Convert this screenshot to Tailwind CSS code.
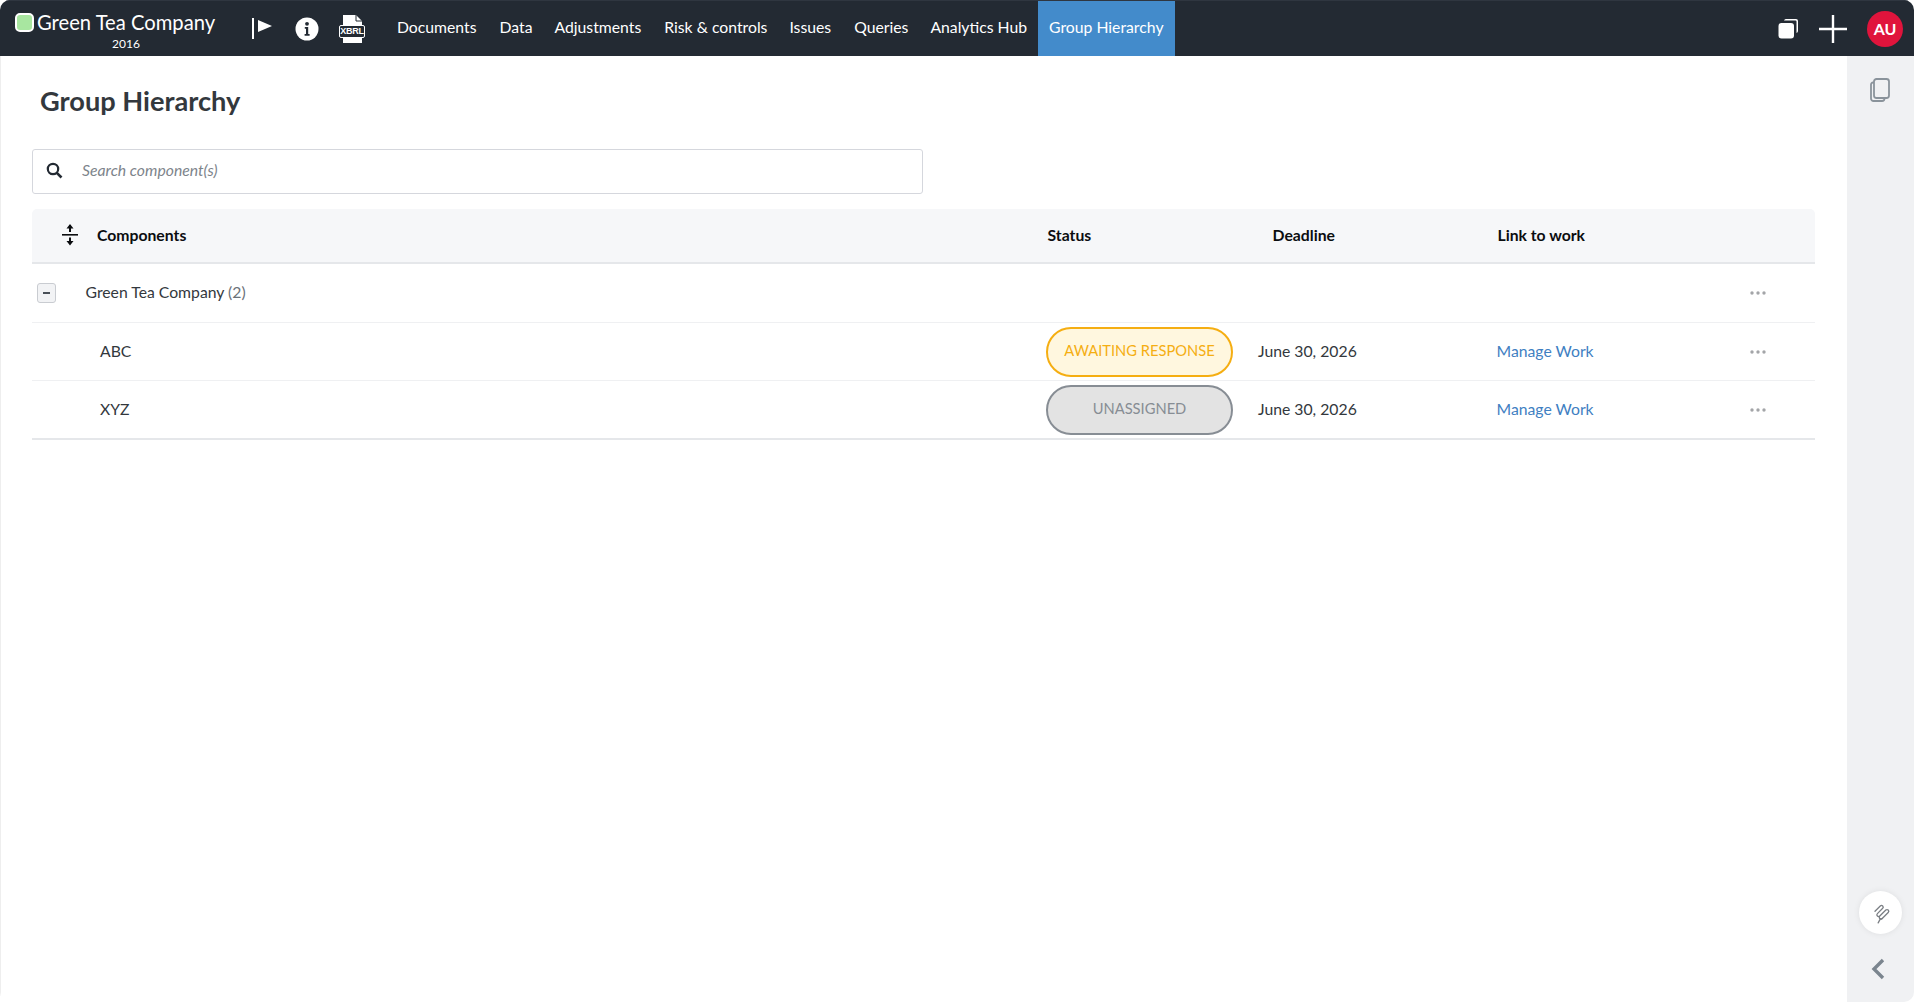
<!DOCTYPE html>
<html>
<head>
<meta charset="utf-8">
<title>Group Hierarchy</title>
<script src="https://cdn.jsdelivr.net/npm/@tailwindcss/browser@4"></script>
</head>
<body class="bg-white font-['Lato','Noto_Sans',sans-serif] text-[15.75px] text-[#33383d]">
<div class="flex h-[1002px] w-[1914px] flex-col overflow-hidden rounded-[10px] bg-white">
  <header class="flex h-[56px] shrink-0 items-stretch border-t border-[#2f3640] bg-[#232a33] text-white">
    <div class="flex w-[397px] shrink-0 items-start">
      <div class="relative w-[235px] shrink-0">
        <span class="absolute left-[15px] top-[12px] h-[19px] w-[19px] rounded-[5px] border-2 border-white bg-[#a8e6a0]"></span>
        <div class="pl-[37px] pt-[7px] text-[20.2px] leading-[29px] whitespace-nowrap">Green Tea Company</div>
        <div class="pl-[112px] text-[12px] leading-[14px]">2016</div>
      </div>
      <svg class="ml-[17px] mt-[17px] shrink-0" width="22" height="22" viewBox="0 0 22 22"><rect x="0" y="0" width="2" height="21" fill="#fff"/><path d="M6 2 L20 8 L6 14 Z" fill="#fff"/></svg>
      <svg class="ml-[21px] mt-[16px] shrink-0" width="24" height="24" viewBox="0 0 24 24"><circle cx="12" cy="12" r="11.500" fill="#fff"/><circle cx="12" cy="6.800" r="1.900" fill="#232a33"/><path d="M9.800 10h3.400v7h1.400v1.800H9.600V17h1.400v-5.200H9.800Z" fill="#232a33"/></svg>
      <div class="relative ml-[20px] mt-[14px] h-[28px] w-[27px] shrink-0">
        <svg class="absolute left-[4px] top-0" width="19" height="28" viewBox="0 0 19 28"><path d="M0 0H13L19 6V28H0Z" fill="#fff"/><path d="M13 0V6H19" fill="none" stroke="#232a33" stroke-width="1"/></svg>
        <span class="absolute left-0 top-[10px] flex h-[13px] w-[26px] items-center justify-center rounded-[2px] border border-white bg-[#232a33] font-['Liberation_Sans',sans-serif] text-[9px] font-bold leading-none tracking-[-0.3px] text-white">XBRL</span>
      </div>
    </div>
    <nav class="flex items-stretch">
      <a class="mr-[23px] flex items-center pb-[3px]">Documents</a>
      <a class="mr-[22px] flex items-center pb-[3px]">Data</a>
      <a class="mr-[23px] flex items-center pb-[3px]">Adjustments</a>
      <a class="mr-[22px] flex items-center pb-[3px]">Risk &amp; controls</a>
      <a class="mr-[23px] flex items-center pb-[3px]">Issues</a>
      <a class="mr-[22px] flex items-center pb-[3px]">Queries</a>
      <a class="mr-[11px] flex items-center pb-[3px]">Analytics Hub</a>
      <a class="flex items-center bg-[#438bcb] px-[11px] pb-[3px]">Group Hierarchy</a>
    </nav>
    <div class="ml-auto flex items-center pr-[11px]">
      <svg width="21" height="21" viewBox="0 0 21 21"><path d="M6 2.500A2 2 0 0 1 8 1H18A2 2 0 0 1 20 3V13A2 2 0 0 1 18.500 15V3.500A1 1 0 0 0 17.500 2.500Z" fill="#fff"/><rect x="0.500" y="5" width="15.500" height="15.500" rx="3" fill="#fff"/></svg>
      <svg class="ml-[20px]" width="28" height="28" viewBox="0 0 28 28"><path d="M14 0V28M0 14H28" stroke="#fff" stroke-width="2.400"/></svg>
      <div class="ml-[20px] flex h-[36px] w-[36px] items-center justify-center rounded-full bg-[#e0143c] text-[16px] font-bold text-white">AU</div>
    </div>
  </header>
  <div class="flex min-h-0 flex-1">
    <main class="min-w-0 flex-1 border-l border-[#eeeeee] pl-[31px] pr-[32px]">
      <h1 class="pl-[8px] pt-[27px] text-[27.2px] font-bold leading-[36px] text-[#33383d]">Group Hierarchy</h1>
      <div class="mt-[30px] flex h-[45px] w-[891px] items-center rounded-[3px] border border-[#d5d7dd] bg-white pb-[3px] pl-[13px]">
        <svg class="mt-[1px]" width="17" height="17" viewBox="0 0 17 17"><circle cx="7" cy="7" r="5.200" fill="none" stroke="#232a33" stroke-width="2.200"/><path d="M10.800 10.800L15.500 15.500" stroke="#232a33" stroke-width="2.600"/></svg>
        <input class="ml-[19px] w-[700px] bg-transparent text-[15.750px] italic outline-none placeholder:text-[#7d848b]" placeholder="Search component(s)">
      </div>
      <div class="mt-[15px] w-[1783px]">
        <div class="grid h-[55px] grid-cols-[995px_225px_225px_225px_113px] items-center rounded-t-[5px] border-b-2 border-[#e5e7ea] bg-[#f6f7f9] font-bold text-[#0b0d10]">
          <div class="flex items-center pl-[31px]">
            <svg class="mb-[1px] ml-[-1px]" width="16" height="22" viewBox="0 0 16 22"><path d="M8 0L11.500 4.500H9V8H7V4.500H4.500Z" fill="#0b0d10"/><rect x="0" y="10" width="16" height="1.600" fill="#0b0d10"/><path d="M8 21.500L11.500 17H9V13.500H7V17H4.500Z" fill="#0b0d10"/></svg>
            <span class="mb-[2px] ml-[19px]">Components</span>
          </div>
          <div class="mb-[2px] pl-[20.5px]">Status</div>
          <div class="mb-[2px] pl-[20.5px]">Deadline</div>
          <div class="mb-[2px] pl-[20.5px]">Link to work</div>
          <div></div>
        </div>
        <div class="grid h-[59px] grid-cols-[995px_225px_225px_225px_113px] items-center border-b border-[#eff0f2]">
          <div class="flex items-center pl-[5px]">
            <span class="flex h-[20px] w-[19px] items-center justify-center rounded-[3px] border border-[#c9ccd1] bg-[#f2f3f5]"><span class="h-[2px] w-[7px] bg-[#4a5058]"></span></span>
            <span class="mb-[2px] ml-[29.500px]">Green Tea Company <span class="text-[#6b7279]">(2)</span></span>
          </div>
          <div></div><div></div><div></div>
          <div class="flex justify-center pr-[1px]"><svg width="16" height="4" viewBox="0 0 16 4"><circle cx="2" cy="2" r="1.700" fill="#a3a5a8"/><circle cx="8" cy="2" r="1.700" fill="#a3a5a8"/><circle cx="14" cy="2" r="1.700" fill="#a3a5a8"/></svg></div>
        </div>
        <div class="grid h-[58px] grid-cols-[995px_225px_225px_225px_113px] items-center border-b border-[#eff0f2]">
          <div class="mb-[2px] pl-[68px]">ABC</div>
          <div class="pl-[19px]"><span class="flex h-[50px] w-[187px] items-center justify-center rounded-full border-2 border-[#f5ae12] bg-[#fff7df] pb-[2px] text-[14.700px] text-[#f5ae12]">AWAITING RESPONSE</span></div>
          <div class="mb-[2px] pl-[6px]">June 30, 2026</div>
          <div class="mb-[2px] pl-[19.5px] text-[#3f80c2]">Manage Work</div>
          <div class="flex justify-center pr-[1px]"><svg width="16" height="4" viewBox="0 0 16 4"><circle cx="2" cy="2" r="1.700" fill="#a3a5a8"/><circle cx="8" cy="2" r="1.700" fill="#a3a5a8"/><circle cx="14" cy="2" r="1.700" fill="#a3a5a8"/></svg></div>
        </div>
        <div class="grid h-[59px] grid-cols-[995px_225px_225px_225px_113px] items-center border-b-2 border-[#e5e7ea]">
          <div class="mb-[2px] pl-[68px]">XYZ</div>
          <div class="pl-[19px]"><span class="flex h-[50px] w-[187px] items-center justify-center rounded-full border-2 border-[#878d94] bg-[#e3e3e3] pb-[2px] text-[14.700px] text-[#878d94]">UNASSIGNED</span></div>
          <div class="mb-[2px] pl-[6px]">June 30, 2026</div>
          <div class="mb-[2px] pl-[19.5px] text-[#3f80c2]">Manage Work</div>
          <div class="flex justify-center pr-[1px]"><svg width="16" height="4" viewBox="0 0 16 4"><circle cx="2" cy="2" r="1.700" fill="#a3a5a8"/><circle cx="8" cy="2" r="1.700" fill="#a3a5a8"/><circle cx="14" cy="2" r="1.700" fill="#a3a5a8"/></svg></div>
        </div>
      </div>
    </main>
    <aside class="flex w-[67px] shrink-0 flex-col items-center bg-[#f0f1f3]">
      <svg class="mt-[22px] mr-[1px]" width="20" height="24" viewBox="0 0 20 24" fill="none" stroke="#8a939b" stroke-width="1.800"><rect x="4" y="1" width="15" height="19" rx="2.500"/><path d="M4 4.500H3A2 2 0 0 0 1 6.500V20.500A2.500 2.500 0 0 0 3.500 23H12A2.500 2.500 0 0 0 14.500 20.500"/></svg>
      <div class="mt-auto flex h-[43px] w-[43px] items-center justify-center rounded-full bg-white shadow-[0_0_6px_rgba(0,0,0,0.08)]">
        <svg width="24" height="24" viewBox="0 0 24 24" fill="none" stroke="#7b7f84" stroke-width="1.300" stroke-linecap="round" stroke-linejoin="round"><g transform="rotate(45 12 12)"><path d="M6.500 15V7.500a1.700 1.700 0 0 1 3.400 0V15a1.700 1.700 0 0 0 3.400 0V6.500a1.700 1.700 0 0 1 3.400 0V15a1.700 1.700 0 0 1-3.400 0"/><path d="M16.700 15a1.700 1.700 0 0 1-1 1.600L17 21"/></g></svg>
      </div>
      <svg class="mb-[22px] mt-[24px] mr-[5px]" width="14" height="22" viewBox="0 0 14 22"><path d="M12 2L3 11L12 20" fill="none" stroke="#7b858e" stroke-width="3.400"/></svg>
    </aside>
  </div>
</div>
</body>
</html>
